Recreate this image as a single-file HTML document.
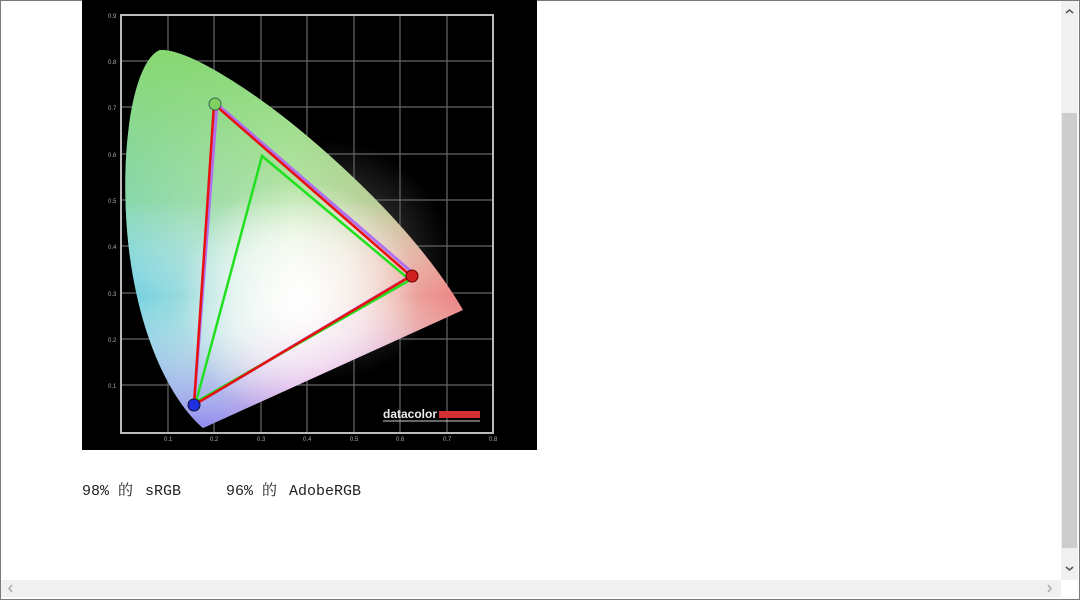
<!DOCTYPE html>
<html><head><meta charset="utf-8"><style>
html,body{margin:0;padding:0;background:#fff;overflow:hidden}
body{width:1080px;height:600px;position:relative}
.frame{position:absolute;left:0;top:0;width:1078px;height:598px;border:1px solid #7a7a7a}
.vs{position:absolute;left:1061px;top:1px;width:17px;height:579px;background:#f0f0f0}
.thumb{position:absolute;left:1062px;top:113px;width:15px;height:435px;background:#cdcdcd}
.hs{position:absolute;left:1px;top:580px;width:1060px;height:17px;background:#f0f0f0}
.corner{position:absolute;left:1061px;top:580px;width:17px;height:17px;background:#fff}
.txt{position:absolute;left:82px;top:479px;font:15px "Liberation Mono","Noto Sans CJK SC",monospace;color:#222;white-space:pre}
.c{display:inline-block;width:18px;font-family:"Noto Serif CJK SC","Noto Sans CJK SC",serif}
</style></head><body>
<div class="frame"></div>
<svg style="position:absolute;left:0;top:0" width="1080" height="600">
<defs>
<linearGradient id="g1" x1="0" y1="0" x2="1" y2="0">
<stop offset="0" stop-color="#70d0e0"/><stop offset="0.5" stop-color="#e8f0d8"/><stop offset="1" stop-color="#ec8080"/></linearGradient>
<linearGradient id="g2" x1="0" y1="0" x2="0" y2="1">
<stop offset="0" stop-color="#88d870"/><stop offset="0.4" stop-color="#98dc88" stop-opacity="0.6"/><stop offset="0.65" stop-color="#fff" stop-opacity="0"/><stop offset="1" stop-color="#9080f0" stop-opacity="0.9"/></linearGradient>
<radialGradient id="pk" cx="330" cy="400" r="110" gradientUnits="userSpaceOnUse">
<stop offset="0" stop-color="#e890e0" stop-opacity="0.8"/><stop offset="1" stop-color="#e890e0" stop-opacity="0"/></radialGradient>
<radialGradient id="w" cx="300" cy="300" r="120" gradientUnits="userSpaceOnUse">
<stop offset="0" stop-color="#fff"/><stop offset="0.55" stop-color="#fff" stop-opacity="0.6"/><stop offset="1" stop-color="#fff" stop-opacity="0"/></radialGradient>
<radialGradient id="glow" cx="330" cy="260" r="120" gradientUnits="userSpaceOnUse">
<stop offset="0" stop-color="#fff" stop-opacity="0.35"/><stop offset="1" stop-color="#fff" stop-opacity="0"/></radialGradient>
</defs>
<rect x="82" y="0" width="455" height="450" fill="#000"/>
<rect x="82" y="0" width="455" height="450" fill="url(#glow)"/>
<g stroke="#666" stroke-width="1.2">
<path d="M168 15V433M214 15V433M261 15V433M307 15V433M354 15V433M400 15V433M447 15V433M121 61H493M121 107H493M121 154H493M121 200H493M121 246H493M121 293H493M121 339H493M121 385H493"/>
</g>
<rect x="121" y="15" width="372" height="418" fill="none" stroke="#bbb" stroke-width="2"/>
<g>
<path d="M203 428 C170 400 135 330 127 230 C120 140 135 60 160 50 C190 48 270 100 340 165 C400 220 440 270 463 310 Z" fill="url(#g1)"/>
<path d="M203 428 C170 400 135 330 127 230 C120 140 135 60 160 50 C190 48 270 100 340 165 C400 220 440 270 463 310 Z" fill="url(#g2)"/>
<path d="M203 428 C170 400 135 330 127 230 C120 140 135 60 160 50 C190 48 270 100 340 165 C400 220 440 270 463 310 Z" fill="url(#pk)"/>
<path d="M203 428 C170 400 135 330 127 230 C120 140 135 60 160 50 C190 48 270 100 340 165 C400 220 440 270 463 310 Z" fill="url(#w)"/>
</g>
<polyline points="217,104 414,274 194,405 217,104" fill="none" stroke="#b070f0" stroke-width="3"/>
<polygon points="262,156 410,280 196,402" fill="none" stroke="#20e020" stroke-width="2.5"/>
<polygon points="214,104 411,276 194,405" fill="none" stroke="#e81010" stroke-width="2.5"/>
<circle cx="215" cy="104" r="6" fill="#80d060" stroke="#365" stroke-width="1"/>
<circle cx="412" cy="276" r="6" fill="#d02020" stroke="#600" stroke-width="1"/>
<circle cx="194" cy="405" r="6" fill="#2030e0" stroke="#113" stroke-width="1"/>
<text x="383" y="418" font-family="Liberation Sans,sans-serif" font-weight="bold" font-size="12" fill="#eee">datacolor</text>
<rect x="439" y="411" width="41" height="7" fill="#d03030"/>
<line x1="383" y1="421" x2="480" y2="421" stroke="#ccc"/>
<g font-family="Liberation Sans,sans-serif" font-size="6" fill="#aaa">
<text x="108" y="18">0.9</text><text x="108" y="64">0.8</text><text x="108" y="110">0.7</text><text x="108" y="157">0.6</text><text x="108" y="203">0.5</text><text x="108" y="249">0.4</text><text x="108" y="296">0.3</text><text x="108" y="342">0.2</text><text x="108" y="388">0.1</text>
<text x="164" y="441">0.1</text><text x="210" y="441">0.2</text><text x="257" y="441">0.3</text><text x="303" y="441">0.4</text><text x="350" y="441">0.5</text><text x="396" y="441">0.6</text><text x="443" y="441">0.7</text><text x="489" y="441">0.8</text>
</g>
</svg>
<div class="txt">98% <span class="c">的</span> sRGB     96% <span class="c">的</span> AdobeRGB</div>
<div class="vs"></div><div class="thumb"></div><div class="hs"></div><div class="corner"></div>
<svg style="position:absolute;left:1061px;top:1px" width="17" height="579">
<path d="M5 12l3.5-3 3.5 3" stroke="#555" stroke-width="1.5" fill="none"/>
<path d="M5 566l3.5 3 3.5-3" stroke="#555" stroke-width="1.5" fill="none"/>
</svg>
<svg style="position:absolute;left:0;top:580px" width="1061" height="17">
<path d="M12 5l-3 3.5 3 3.5" stroke="#aaa" stroke-width="1.5" fill="none"/>
<path d="M1048 5l3 3.5-3 3.5" stroke="#aaa" stroke-width="1.5" fill="none"/>
</svg>
</body></html>
